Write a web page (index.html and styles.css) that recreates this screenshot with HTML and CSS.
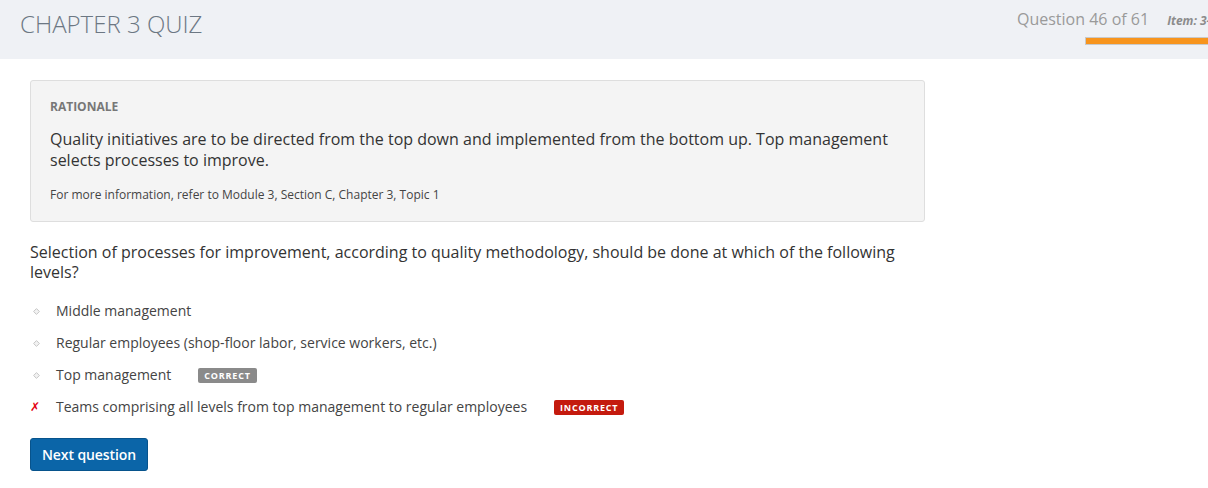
FILE: index.html
```html
<!DOCTYPE html>
<html lang="en">
<head>
<meta charset="utf-8">
<title>Chapter 3 Quiz</title>
<link rel="stylesheet" href="styles.css">
</head>
<body>
<header class="topbar">
  <h1 class="quiz-title">CHAPTER 3 QUIZ</h1>
  <div class="progress-block">
    <div class="progress-row">
      <span class="progress-count">Question 46 of 61</span>
      <span class="progress-item">Item: 3-46-1042</span>
    </div>
    <div class="progress-bar"><div class="progress-fill" style="width: 75%"></div></div>
  </div>
</header>

<main class="content">
  <section class="rationale">
    <div class="rationale-label">RATIONALE</div>
    <p class="rationale-text">Quality initiatives are to be directed from the top down and implemented from the bottom up. Top management selects processes to improve.</p>
    <p class="rationale-ref">For more information, refer to Module 3, Section C, Chapter 3, Topic 1</p>
  </section>

  <p class="question">Selection of processes for improvement, according to quality methodology, should be done at which of the following levels?</p>

  <ul class="options">
    <li class="option">
      <span class="marker"><svg class="dot" width="7" height="7" viewBox="0 0 7 7"><path d="M3.5 0.6 L6.4 3.5 L3.5 6.4 L0.6 3.5 Z" fill="#f2f2f2" stroke="#c6c6c6" stroke-width="1"/></svg></span>
      <span class="option-text">Middle management</span>
    </li>
    <li class="option">
      <span class="marker"><svg class="dot" width="7" height="7" viewBox="0 0 7 7"><path d="M3.5 0.6 L6.4 3.5 L3.5 6.4 L0.6 3.5 Z" fill="#f2f2f2" stroke="#c6c6c6" stroke-width="1"/></svg></span>
      <span class="option-text">Regular employees (shop-floor labor, service workers, etc.)</span>
    </li>
    <li class="option">
      <span class="marker"><svg class="dot" width="7" height="7" viewBox="0 0 7 7"><path d="M3.5 0.6 L6.4 3.5 L3.5 6.4 L0.6 3.5 Z" fill="#f2f2f2" stroke="#c6c6c6" stroke-width="1"/></svg></span>
      <span class="option-text">Top management</span>
      <span class="badge badge-correct">CORRECT</span>
    </li>
    <li class="option">
      <span class="marker marker-wrong">&#x2717;</span>
      <span class="option-text">Teams comprising all levels from top management to regular employees</span>
      <span class="badge badge-incorrect">INCORRECT</span>
    </li>
  </ul>

  <button class="next-btn" type="button">Next question</button>
</main>
</body>
</html>
```

FILE: styles.css
```css
* { box-sizing: border-box; }

html, body {
  margin: 0;
  padding: 0;
  background: #ffffff;
  font-family: "Open Sans", "Noto Sans", "Liberation Sans", sans-serif;
  color: #333333;
}

.topbar {
  height: 59px;
  background: #eff1f5;
  display: grid;
  grid-template-columns: 1017px 300px;
  overflow: hidden;
}

.quiz-title {
  margin: 0;
  padding: 7px 0 0 20px;
  font-size: 24px;
  line-height: 34px;
  font-weight: 300;
  color: #6c7783;
  letter-spacing: 0;
}

.progress-block {
  padding-top: 8px;
  display: flex;
  flex-direction: column;
}

.progress-row {
  display: flex;
  align-items: baseline;
  white-space: nowrap;
  line-height: 22px;
}

.progress-count {
  font-size: 16px;
  color: #9a9a9a;
}

.progress-item {
  margin-left: 18px;
  font-size: 12px;
  font-weight: 700;
  font-style: italic;
  color: #8c8c8c;
}

.progress-bar {
  margin: 5px 0 0 68px;
  width: 240px;
  height: 8px;
  border: 1px solid #c9c9c9;
  background: #f7941d;
}

.progress-fill {
  height: 100%;
  background: #f7941d;
}

.content {
  padding: 21px 0 0 30px;
  width: 925px;
}

.rationale {
  border: 1px solid #dedede;
  border-radius: 3px;
  background: #f4f4f4;
  padding: 18px 19px 18px 19px;
}

.rationale-label {
  font-size: 12px;
  line-height: 16px;
  font-weight: 700;
  color: #777777;
}

.rationale-text {
  margin: 14px 0 0 0;
  font-size: 16px;
  line-height: 21px;
  color: #333333;
}

.rationale-ref {
  margin: 16px 0 0 0;
  font-size: 12px;
  line-height: 16px;
  color: #444444;
}

.question {
  margin: 20px 0 0 0;
  font-size: 16px;
  line-height: 20px;
  color: #333333;
}

.options {
  list-style: none;
  margin: 13px 0 0 0;
  padding: 0;
}

.option {
  display: flex;
  align-items: center;
  padding: 6px 0;
  font-size: 14px;
  line-height: 20px;
  color: #444444;
}

.marker {
  width: 26px;
  flex: none;
  display: flex;
  align-items: center;
  padding-left: 3px;
}

.dot { display: block; }

.marker-wrong {
  padding-left: 0;
  color: #e3000f;
  font-family: "DejaVu Sans", sans-serif;
  font-size: 12px;
  font-weight: 700;
}

.badge {
  margin-left: 27px;
  height: 15px;
  line-height: 15px;
  padding: 0 6px;
  border-radius: 2px;
  font-size: 9px;
  font-weight: 700;
  letter-spacing: 0.8px;
  color: #ffffff;
}

.badge-correct { background: #8a8a8a; }
.badge-incorrect { background: #c41a0e; }

.next-btn {
  margin-top: 15px;
  height: 33px;
  padding: 0 11px;
  border: 1px solid #07538c;
  border-radius: 3px;
  background: #0b65a8;
  color: #ffffff;
  font-family: "Open Sans", "Noto Sans", sans-serif;
  font-size: 14px;
  font-weight: 600;
  letter-spacing: -0.1px;
  line-height: 20px;
}
```
